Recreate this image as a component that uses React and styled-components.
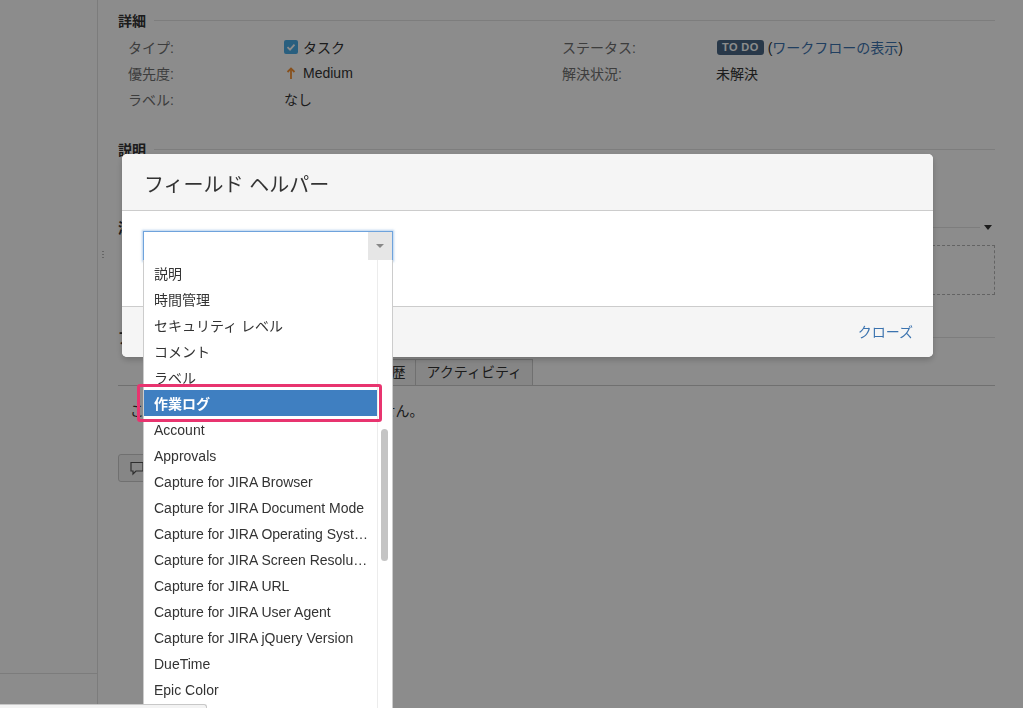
import React from "react";
import styled, { createGlobalStyle } from "styled-components";

const GlobalStyle = createGlobalStyle`
  html, body {
    margin: 0;
    padding: 0;
    height: 100%;
    overflow: hidden;
  }
  body {
    font-family: "Liberation Sans", "Noto Sans CJK JP", sans-serif;
    font-size: 14px;
    color: #333;
    background: #fff;
  }
`;

const Page = styled.div`
  display: flex;
  height: 708px;
  overflow: hidden;
`;

const Sidebar = styled.div`
  width: 97px;
  flex: none;
  border-right: 1px solid #e2e2e2;
  display: flex;
  flex-direction: column;
  justify-content: flex-end;
`;

const SidebarFooter = styled.div`
  height: 34px;
  border-top: 1px solid #e2e2e2;
`;

const Main = styled.div`
  flex: 1;
  padding: 10px 28px 0 20px;
`;

const ModHeader = styled.div`
  display: flex;
  align-items: center;
  height: 20px;
  font-size: 14px;
  font-weight: bold;
  color: #333;
  margin-top: ${(p) => p.$top || 0}px;
`;

const Rule = styled.div`
  flex: 1;
  height: 1px;
  background: #e4e4e4;
  margin-left: 8px;
`;

const Caret = styled.span`
  width: 0;
  height: 0;
  margin: 0 3px 0 4px;
  border-left: 4px solid transparent;
  border-right: 4px solid transparent;
  border-top: 5px solid #333;
`;

const DetailGrid = styled.div`
  display: grid;
  grid-template-columns: 156px 278px 154px 1fr;
  grid-auto-rows: 26px;
  align-items: center;
  padding-left: 10px;
  margin-top: 4px;
`;

const Label = styled.div`
  color: #707070;
`;

const Value = styled.div`
  display: flex;
  align-items: center;
  gap: 5px;
  color: #333;
`;

const Lozenge = styled.span`
  background: #4a6785;
  color: #fff;
  font-size: 11px;
  font-weight: bold;
  letter-spacing: 0.4px;
  line-height: 15px;
  padding: 0 5px;
  border-radius: 3px;
  margin: 0 -1px 0 1px;
`;

const Link = styled.span`
  color: #3b73af;
`;

const DescriptionBody = styled.div`
  height: 38px;
`;

const AttachSection = styled.div`
  position: relative;
`;

const Grip = styled.div`
  position: absolute;
  left: -16px;
  top: 33px;
  width: 2px;
  height: 10px;
  background: radial-gradient(circle, #bbb 0.8px, transparent 1px) 0 0 / 2px 3px;
`;

const DropZone = styled.div`
  height: 50px;
  box-sizing: border-box;
  margin: 8px 0 0 10px;
  border: 1px dashed #b5b5b5;
`;

const Tabs = styled.div`
  display: flex;
  margin-top: 12px;
  padding-left: 33px;
  border-bottom: 1px solid #ccc;
`;

const Tab = styled.div`
  height: 25px;
  line-height: 25px;
  padding: 0 10px;
  border: 1px solid #ccc;
  border-bottom: none;
  margin-right: -1px;
  background: ${(p) => (p.$active ? "#fff" : "#f5f5f5")};
  color: #333;
`;

const EmptyText = styled.div`
  margin-top: 15px;
  padding-left: 12px;
  line-height: 20px;
`;

const CommentButton = styled.div`
  display: inline-flex;
  align-items: center;
  gap: 6px;
  margin-top: 33px;
  height: 28px;
  box-sizing: border-box;
  padding: 0 10px;
  border: 1px solid #ccc;
  border-radius: 3px;
  background: #f5f5f5;
`;

const Overlay = styled.div`
  position: fixed;
  inset: 0;
  background: rgba(0, 0, 0, 0.45);
`;

const Modal = styled.div`
  position: fixed;
  left: 122px;
  top: 154px;
  width: 811px;
  border-radius: 5px;
  background: #fff;
  box-shadow: 0 3px 6px rgba(0, 0, 0, 0.2);
`;

const ModalHeader = styled.div`
  height: 57px;
  box-sizing: border-box;
  display: flex;
  align-items: center;
  padding: 3px 22px 0;
  background: #f5f5f5;
  border-bottom: 1px solid #ccc;
  border-radius: 5px 5px 0 0;
  font-size: 20px;
  color: #333;
`;

const ModalBody = styled.div`
  height: 95px;
  box-sizing: border-box;
  padding: 20px 21px;
`;

const ModalFooter = styled.div`
  height: 51px;
  box-sizing: border-box;
  display: flex;
  align-items: center;
  justify-content: flex-end;
  padding: 0 20px 2px;
  background: #f5f5f5;
  border-top: 1px solid #ccc;
  border-radius: 0 0 5px 5px;
`;

const SelectBox = styled.div`
  position: relative;
  display: flex;
  width: 250px;
  height: 30px;
  box-sizing: border-box;
  border: 1px solid #6fa3dc;
  box-shadow: 0 0 2px 1px rgba(111, 163, 220, 0.5);
  background: #fff;
`;

const SelectInput = styled.div`
  flex: 1;
`;

const SelectArrow = styled.div`
  width: 24px;
  display: flex;
  align-items: center;
  justify-content: center;
  background: #e6e6e6;
  &::before {
    content: "";
    border-left: 4px solid transparent;
    border-right: 4px solid transparent;
    border-top: 4px solid #888;
  }
`;

const Dropdown = styled.div`
  position: absolute;
  top: 100%;
  left: -1px;
  width: 250px;
  height: 460px;
  box-sizing: border-box;
  display: flex;
  background: #fff;
  border: 1px solid #ccc;
  border-top: none;
`;

const List = styled.div`
  flex: 1;
  min-width: 0;
`;

const Item = styled.div`
  position: relative;
  display: flex;
  align-items: center;
  height: 26px;
  padding: 0 8px 0 10px;
  margin-bottom: ${(p) => (p.$active ? 1 : 0)}px;
  color: ${(p) => (p.$active ? "#fff" : "#333")};
  background: ${(p) => (p.$active ? "#3f7fc1" : "transparent")};
  font-weight: ${(p) => (p.$active ? "bold" : "normal")};
`;

const ItemText = styled.span`
  white-space: nowrap;
  overflow: hidden;
  text-overflow: ellipsis;
`;

const Callout = styled.div`
  position: absolute;
  top: -6px;
  left: -7px;
  right: -5px;
  bottom: -6px;
  border: 3px solid #e8346f;
  border-radius: 3px;
`;

const ScrollTrack = styled.div`
  width: 14px;
  flex: none;
  border-left: 1px solid #ececec;
  padding-top: 169px;
`;

const ScrollThumb = styled.div`
  width: 7px;
  height: 132px;
  margin-left: 3px;
  border-radius: 4px;
  background: #c4c4c4;
`;

const StatusBubble = styled.div`
  position: fixed;
  left: 0;
  bottom: 0;
  width: 206px;
  height: 3px;
  background: #f3f3f3;
  border-top: 1px solid #c8c8c8;
  border-right: 1px solid #c8c8c8;
  border-top-right-radius: 3px;
`;

const TaskIcon = () => (
  <svg width="14" height="14" viewBox="0 0 14 14">
    <rect x="0" y="0" width="14" height="14" rx="2" fill="#4bade8" />
    <path d="M3.5 7.2 L6 9.6 L10.5 4.6" stroke="#fff" strokeWidth="1.8" fill="none" />
  </svg>
);

const UpArrow = () => (
  <svg width="14" height="14" viewBox="0 0 14 14">
    <path d="M7 2.5 L7 13" stroke="#f79232" strokeWidth="1.8" />
    <path d="M3.5 6 L7 2.5 L10.5 6" stroke="#f79232" strokeWidth="1.8" fill="none" />
  </svg>
);

const BubbleIcon = () => (
  <svg width="16" height="16" viewBox="0 0 16 16">
    <path d="M2 2.5 H14 V11 H7 L4 14 V11 H2 Z" fill="none" stroke="#555" strokeWidth="1.2" />
  </svg>
);

const fields = [
  "説明",
  "時間管理",
  "セキュリティ レベル",
  "コメント",
  "ラベル",
  "作業ログ",
  "Account",
  "Approvals",
  "Capture for JIRA Browser",
  "Capture for JIRA Document Mode",
  "Capture for JIRA Operating System",
  "Capture for JIRA Screen Resolution",
  "Capture for JIRA URL",
  "Capture for JIRA User Agent",
  "Capture for JIRA jQuery Version",
  "DueTime",
  "Epic Color",
  "Epic Link",
];

const tabs = ["すべて", "コメント", "作業ログ", "履歴", "アクティビティ"];

export default function App() {
  return (
    <>
      <GlobalStyle />
      <Page>
        <Sidebar>
          <SidebarFooter />
        </Sidebar>
        <Main>
          <ModHeader>
            詳細
            <Rule />
          </ModHeader>
          <DetailGrid>
            <Label>タイプ:</Label>
            <Value>
              <TaskIcon />
              タスク
            </Value>
            <Label>ステータス:</Label>
            <Value>
              <Lozenge>TO DO</Lozenge>
              <span>
                (<Link>ワークフローの表示</Link>)
              </span>
            </Value>
            <Label>優先度:</Label>
            <Value>
              <UpArrow />
              Medium
            </Value>
            <Label>解決状況:</Label>
            <Value>未解決</Value>
            <Label>ラベル:</Label>
            <Value>なし</Value>
          </DetailGrid>

          <ModHeader $top={27}>
            説明
            <Rule />
          </ModHeader>
          <DescriptionBody />

          <AttachSection>
            <ModHeader $top={20}>
              添付ファイル
              <Rule />
              <Caret />
            </ModHeader>
            <Grip />
            <DropZone />
          </AttachSection>

          <ModHeader $top={32}>
            アクティビティ
            <Rule />
          </ModHeader>
          <Tabs>
            {tabs.map((t) => (
              <Tab key={t}>{t}</Tab>
            ))}
          </Tabs>
          <EmptyText>このイシューにはまだコメントがありません。</EmptyText>
          <CommentButton>
            <BubbleIcon />
            コメント
          </CommentButton>
        </Main>
      </Page>

      <Overlay />

      <Modal>
        <ModalHeader>フィールド ヘルパー</ModalHeader>
        <ModalBody>
          <SelectBox>
            <SelectInput />
            <SelectArrow />
            <Dropdown>
              <List>
                {fields.map((f) => (
                  <Item key={f} $active={f === "作業ログ"}>
                    <ItemText>{f}</ItemText>
                    {f === "作業ログ" && <Callout />}
                  </Item>
                ))}
              </List>
              <ScrollTrack>
                <ScrollThumb />
              </ScrollTrack>
            </Dropdown>
          </SelectBox>
        </ModalBody>
        <ModalFooter>
          <Link>クローズ</Link>
        </ModalFooter>
      </Modal>

      <StatusBubble />
    </>
  );
}
